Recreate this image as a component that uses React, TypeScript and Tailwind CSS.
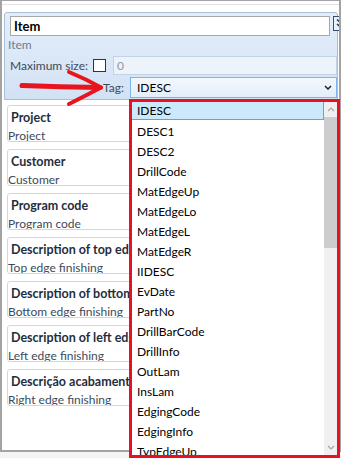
import React from "react";

const rows = [
  { title: "Project", sub: "Project" },
  { title: "Customer", sub: "Customer" },
  { title: "Program code", sub: "Program code" },
  { title: "Description of top edge finishing", sub: "Top edge finishing" },
  { title: "Description of bottom edge finishing", sub: "Bottom edge finishing" },
  { title: "Description of left edge finishing", sub: "Left edge finishing" },
  { title: "Descrição acabamento borda direita", sub: "Right edge finishing" },
];

const tags = [
  "IDESC",
  "DESC1",
  "DESC2",
  "DrillCode",
  "MatEdgeUp",
  "MatEdgeLo",
  "MatEdgeL",
  "MatEdgeR",
  "IIDESC",
  "EvDate",
  "PartNo",
  "DrillBarCode",
  "DrillInfo",
  "OutLam",
  "InsLam",
  "EdgingCode",
  "EdgingInfo",
  "TypEdgeUp",
];

const App: React.FC = () => {
  return (
    <div className="relative w-[341px] h-[458px] overflow-hidden bg-[#f4f4f4] font-['Lato','Liberation_Sans',sans-serif] text-[12px]">
      <div className="w-[341px] h-[452px] overflow-hidden border-t border-l-2 border-r-2 border-b-2 border-[#a3a3a3] bg-white">
        <div className="h-[4px] border-b border-[#e4e4e4]" />
        <div className="h-[7px]" />

        {/* header panel */}
        <div className="ml-[2px] mr-[1px] h-[88px] border border-[#a9bfd8] rounded-t-[3px] bg-gradient-to-b from-[#e4eefa] to-[#d2e2f5]">
          <div className="flex items-start pl-[5px] pt-[3px]">
            <div className="w-[320px] shrink-0 h-[20px] bg-white border border-[#a8a8a8] pl-[3px] leading-[18px] font-bold text-[13px] text-black">
              Item
            </div>
            <div className="ml-[3px] w-[16px] h-[15px] border border-[#35506e] bg-[#e9f0f8] flex items-center justify-center shrink-0">
              <svg width="10" height="11" viewBox="0 0 10 11" fill="none" stroke="#1f3550" strokeWidth="1.4">
                <path d="M1 1.5 L5 5 L9 1.5" />
                <path d="M1 6 L5 9.5 L9 6" />
              </svg>
            </div>
          </div>
          <div className="pl-[3px] h-[16px] leading-[16px] mt-[1px] text-[#6f7d8c]">Item</div>
          <div className="flex items-center mt-[3px] h-[19px]">
            <div className="w-[88px] pl-[5px] text-[#3e4958]">Maximum size:</div>
            <div className="w-[13px] h-[13px] bg-white border border-[#333]" />
            <div className="ml-[7px] flex-1 h-[19px] border border-[#c3d2e4] bg-[#edf3fa] pl-[3px] leading-[17px] text-[#8b97a4]">
              0
            </div>
          </div>
          <div className="flex items-center mt-[2px] h-[21px]">
            <div className="w-[125px] pr-[6px] text-right text-[#3e4958]">Tag:</div>
            <div className="flex-1 h-[21px] border border-[#7eb4ea] bg-gradient-to-b from-[#f3f8fd] to-[#e3eefa] flex items-center justify-between pl-[6px] pr-[4px] text-black">
              <span>IDESC</span>
              <svg width="8" height="5" viewBox="0 0 8 5" fill="none" stroke="#222" strokeWidth="1.5">
                <path d="M1 1 L4 4 L7 1" />
              </svg>
            </div>
          </div>
        </div>

        {/* property rows */}
        <div className="mt-[5px] ml-[5px] mr-[2px] flex flex-col gap-[7px]">
          {rows.map((r) => (
            <div
              key={r.title}
              className="h-[37px] border border-[#d6d6d6] rounded-[3px] bg-white pt-[3px] whitespace-nowrap overflow-hidden"
            >
              <div className="pl-[3px] h-[18px] leading-[18px] font-bold text-[12.5px] text-[#1f2e3e]">{r.title}</div>
              <div className="mt-[1px] h-[16px] leading-[16px] text-[#3c4b5b]">{r.sub}</div>
            </div>
          ))}
        </div>
      </div>

      {/* red arrow annotation */}
      <svg
        className="absolute left-[15px] top-[62px]"
        width="95"
        height="50"
        viewBox="15 62 95 50"
        fill="none"
        stroke="#e8141e"
        strokeLinecap="round"
        strokeLinejoin="round"
      >
        <path d="M22 85.5 Q60 87 99 87.5" strokeWidth="5" />
        <path d="M69 72 Q86 79 101 87.5" strokeWidth="4" />
        <path d="M101 87.5 Q85 96 69 104" strokeWidth="4" />
      </svg>

      {/* open dropdown list */}
      <div className="absolute left-[129px] top-[99px] w-[211px] h-[359px] border-[3px] border-[#e81123] bg-white flex">
        <div className="flex-1 overflow-hidden">
          {tags.map((t, i) => (
            <div
              key={t}
              className={
                i === 0
                  ? "h-[20px] pb-[2px]"
                  : "h-[20px] pl-[5px] leading-[20px] text-black"
              }
            >
              {i === 0 ? (
                <div className="h-[18px] bg-[#cce8fb] border-r border-b border-[#5aa6df] pl-[5px] leading-[18px] text-black">
                  {t}
                </div>
              ) : (
                t
              )}
            </div>
          ))}
        </div>
        <div className="w-[13px] bg-[#f0f0f0] flex flex-col">
          <div className="h-[15px] flex items-center justify-center">
            <svg width="8" height="5" viewBox="0 0 8 5" fill="none" stroke="#a6a6a6" strokeWidth="1.2">
              <path d="M1 4 L4 1 L7 4" />
            </svg>
          </div>
          <div className="h-[131px] bg-[#cdcdcd]" />
          <div className="flex-1" />
          <div className="h-[15px] flex items-center justify-center">
            <svg width="8" height="5" viewBox="0 0 8 5" fill="none" stroke="#a6a6a6" strokeWidth="1.2">
              <path d="M1 1 L4 4 L7 1" />
            </svg>
          </div>
        </div>
      </div>
    </div>
  );
};

export default App;
